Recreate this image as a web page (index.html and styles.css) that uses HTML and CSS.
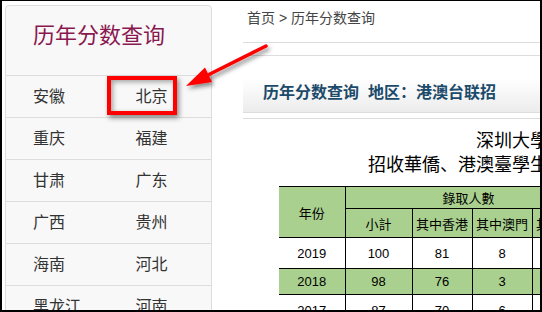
FILE: index.html
```html
<!DOCTYPE html>
<html lang="zh-CN">
<head>
    <meta charset="UTF-8">
    <title>历年分数查询</title>
    <link rel="stylesheet" href="styles.css">
</head>
<body>

<div class="frame">
    <aside class="side-menu">
        <h2 class="side-title">历年分数查询</h2>
        <ul class="area-list">
            <li>安徽</li><li>北京</li>
            <li>重庆</li><li>福建</li>
            <li>甘肃</li><li>广东</li>
            <li>广西</li><li>贵州</li>
            <li>海南</li><li>河北</li>
            <li>黑龙江</li><li>河南</li>
        </ul>
    </aside>

    <main class="main">
        <div class="crumbs">首页 &gt; 历年分数查询</div>
        <div class="page-head">
            <h1>历年分数查询&nbsp;&nbsp;地区：港澳台联招</h1>
        </div>
        <div class="head-rule"></div>

        <div class="report">
            <p class="report-title">深圳大學<br>招收華僑、港澳臺學生歷年錄取情況</p>
            <table class="score-table">
                <colgroup>
                    <col style="width:66px">
                    <col style="width:67px">
                    <col style="width:60px">
                    <col style="width:60px">
                    <col style="width:60px">
                    <col style="width:76px">
                    <col style="width:77px">
                </colgroup>
                <tr class="green r-top">
                    <td rowspan="2" class="first">年份</td>
                    <td colspan="4">錄取人數</td>
                    <td rowspan="2">最高分</td>
                    <td rowspan="2">最低分</td>
                </tr>
                <tr class="green r-sub">
                    <td>小計</td>
                    <td>其中香港</td>
                    <td>其中澳門</td>
                    <td>其中臺灣</td>
                </tr>
                <tr class="r-a">
                    <td class="first">2019</td><td>100</td><td>81</td><td>8</td><td>11</td><td>612</td><td>498</td>
                </tr>
                <tr class="green r-b">
                    <td class="first">2018</td><td>98</td><td>76</td><td>3</td><td>19</td><td>605</td><td>486</td>
                </tr>
                <tr class="r-c">
                    <td class="first">2017</td><td>87</td><td>70</td><td>6</td><td>11</td><td>598</td><td>480</td>
                </tr>
            </table>
        </div>
    </main>

    <!-- annotation drawn over the page -->
    <div class="mark-box"></div>
    <svg class="mark-arrow" width="542" height="312" viewBox="0 0 542 312">
        <defs>
            <filter id="shade" x="-20%" y="-20%" width="140%" height="160%">
                <feDropShadow dx="2" dy="3" stdDeviation="2" flood-color="#000" flood-opacity="0.45"/>
            </filter>
        </defs>
        <g filter="url(#shade)">
            <line x1="266" y1="46" x2="203" y2="77.5" stroke="#f00" stroke-width="3.5" stroke-linecap="round"/>
            <polygon points="186,86 205,67.5 212,82" fill="#f00"/>
        </g>
    </svg>
</div>

</body>
</html>
```

FILE: styles.css
```css
:root {
    --line: #dddddd;
    --panel: #f8f8f8;
    --plum: #8a1850;
    --ink: #333333;
    --navy: #1b4a6a;
    --leaf: #a9d08e;
}

body {
    margin: 0;
    font-family: "Liberation Sans", "Noto Sans CJK SC", sans-serif;
    color: var(--ink);
}

.frame {
    position: relative;
    width: 542px;
    height: 312px;
    box-sizing: border-box;
    border: 2px solid #000;
    border-top-width: 1px;
    background: #fff;
    overflow: hidden;
    display: flex;
    align-items: flex-start;
}

/* left menu */
.side-menu {
    width: 207px;
    flex: none;
    box-sizing: border-box;
    margin: 4px 0 0 3px;
    background: var(--panel);
    border: 1px solid var(--line);
    border-radius: 4px 4px 0 0;
    height: 400px;
}

.side-title {
    margin: 0;
    padding: 15px 0 24px 27px;
    font-size: 22px;
    line-height: 30px;
    font-weight: normal;
    color: var(--plum);
    border-bottom: 1px solid var(--line);
}

.area-list {
    list-style: none;
    margin: 0;
    padding: 0;
    display: grid;
    grid-template-columns: 1fr 1fr;
}

.area-list li {
    height: 41px;
    line-height: 41px;
    padding-left: 27px;
    font-size: 16px;
    border-bottom: 1px solid var(--line);
}

/* right content */
.main {
    flex: 1;
    min-width: 0;
    margin-left: 31px;
}

.crumbs {
    height: 34px;
    line-height: 34px;
    padding: 0 0 7px 4px;
    font-size: 14px;
    color: #444;
    border-bottom: 1px solid var(--line);
}

.page-head {
    margin-top: 12px;
    height: 56px;
    border-top: 1px solid var(--line);
    border-bottom: 1px solid var(--line);
    background: linear-gradient(to bottom, #ffffff 0%, #ffffff 40%, #ececec 100%);
}

.page-head h1 {
    margin: 0;
    padding: 25px 0 0 20px;
    font-size: 16px;
    line-height: 24px;
    color: var(--navy);
}

.head-rule {
    margin-top: 5px;
    border-top: 1px solid var(--line);
}

.report {
    width: 466px;
    margin-left: 36px;
}

.report-title {
    margin: 10px 0 9px;
    text-align: center;
    font-size: 18px;
    line-height: 24px;
    color: #000;
    white-space: nowrap;
}

.score-table {
    table-layout: fixed;
    width: 466px;
    border-collapse: collapse;
    font-size: 13px;
    color: #000;
}

.score-table td {
    border: 1px solid #000;
    text-align: center;
    padding: 0;
    white-space: nowrap;
    overflow: hidden;
}

.score-table td.first {
    border-left: none;
}

.green td {
    background: var(--leaf);
}

.r-top td { height: 21px; }
.r-sub td { height: 28px; }
.r-a td { height: 30px; }
.r-b td { height: 25px; }
.r-c td { height: 30px; }

/* red highlight over the menu */
.mark-box {
    position: absolute;
    left: 105px;
    top: 75px;
    width: 62px;
    height: 31px;
    border: 4px solid #f00;
    box-shadow: 2px 3px 5px rgba(0,0,0,0.45), inset 2px 2px 5px rgba(0,0,0,0.35);
}

.mark-arrow {
    position: absolute;
    left: -2px;
    top: -1px;
    pointer-events: none;
}
```
